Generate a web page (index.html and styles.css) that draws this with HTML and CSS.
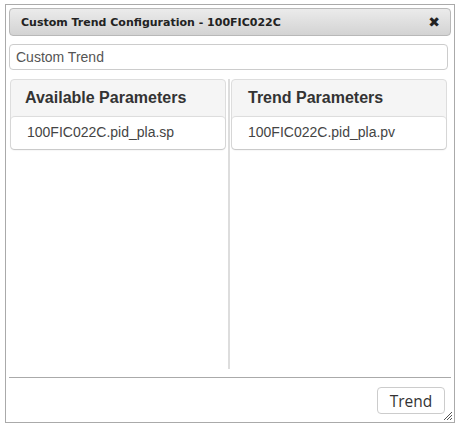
FILE: index.html
```html
<!DOCTYPE html>
<html>
<head>
<meta charset="utf-8">
<link rel="stylesheet" href="styles.css">
</head>
<body>
<div class="dialog">
  <div class="titlebar">
    <span class="title">Custom Trend Configuration - 100FIC022C</span>
    <span class="close">&#x2716;</span>
  </div>
  <div class="content">
    <input class="name" type="text" value="Custom Trend">
    <div class="columns">
      <div class="col">
        <div class="panel">
          <div class="panel-head">Available Parameters</div>
          <div class="item">100FIC022C.pid_pla.sp</div>
        </div>
      </div>
      <div class="divider"></div>
      <div class="col">
        <div class="panel">
          <div class="panel-head">Trend Parameters</div>
          <div class="item">100FIC022C.pid_pla.pv</div>
        </div>
      </div>
    </div>
  </div>
  <div class="buttonpane">
    <button class="btn">Trend</button>
  </div>
  <svg class="grip" width="12" height="12" viewBox="0 0 12 12">
    <path d="M11 3 L3 11 M11 6 L6 11 M11 9 L9 11" stroke="#555" stroke-width="1" fill="none"/>
  </svg>
</div>
</body>
</html>
```
FILE: styles.css
```css
html, body { margin: 0; padding: 0; background: #fff; }
.dialog {
  position: absolute;
  left: 5px; top: 4px;
  border: 1px solid #aaaaaa;
  padding: 3px;
  box-sizing: content-box;
  width: 442px; height: 411px;
  display: flex; flex-direction: column;
  font-family: "Liberation Sans", Arial, sans-serif;
}
.titlebar {
  height: 26px;
  border: 1px solid #b8b8b8;
  border-radius: 4px;
  background: linear-gradient(#ebebeb, #d3d3d3);
  display: flex; align-items: center; justify-content: space-between;
  padding: 0 10px 0 11px;
}
.title {
  font-family: "DejaVu Sans", Verdana, sans-serif;
  font-weight: bold; font-size: 11px; color: #222;
}
.close { font-size: 14px; color: #222; font-family: "DejaVu Sans", sans-serif; font-weight: bold; }
.content { padding: 8px 0 0 0; flex: 1; display: flex; flex-direction: column; }
.name {
  box-sizing: border-box;
  width: 439px; height: 26px;
  border: 1px solid #cccccc; border-radius: 4px;
  padding: 0 6px; margin: 0;
  font-family: "Liberation Sans", Arial, sans-serif; font-size: 14px; color: #555;
  outline: none;
}
.columns { display: flex; margin-top: 9px; flex: 1; padding-bottom: 8px; }
.col { width: 219px; padding-left: 1px; box-sizing: border-box; }
.col:last-child { padding-left: 1px; width: 217px; }
.divider { width: 2px; background: #dddddd; }
.panel {
  border: 1px solid #dddddd; border-radius: 4px;
  background: #f5f5f5;
  width: 216px; box-sizing: border-box;
}
.panel-head {
  height: 36px; line-height: 36px;
  padding-left: 14px;
  font-weight: bold; font-size: 16px; color: #333;
}
.col:last-child .panel-head { padding-left: 16px; }
.item {
  background: #fff;
  border-top: 1px solid #dddddd;
  border-radius: 4px;
  box-shadow: 0 1px 2px rgba(0,0,0,0.12);
  height: 32px; line-height: 31px;
  padding-left: 16px;
  font-size: 14px; color: #444;
}
.buttonpane {
  border-top: 1px solid #aaaaaa;
  height: 41px;
  display: flex; justify-content: flex-end; align-items: center;
  padding-right: 6px;
}
.btn {
  width: 68px; height: 27px;
  border: 1px solid #cccccc; border-radius: 4px; background: #fff;
  font-family: "Open Sans", "Liberation Sans", sans-serif; font-size: 15.5px; color: #333;
  padding: 0; margin-top: 4px;
}
.grip { position: absolute; right: 1px; bottom: 1px; }
```
